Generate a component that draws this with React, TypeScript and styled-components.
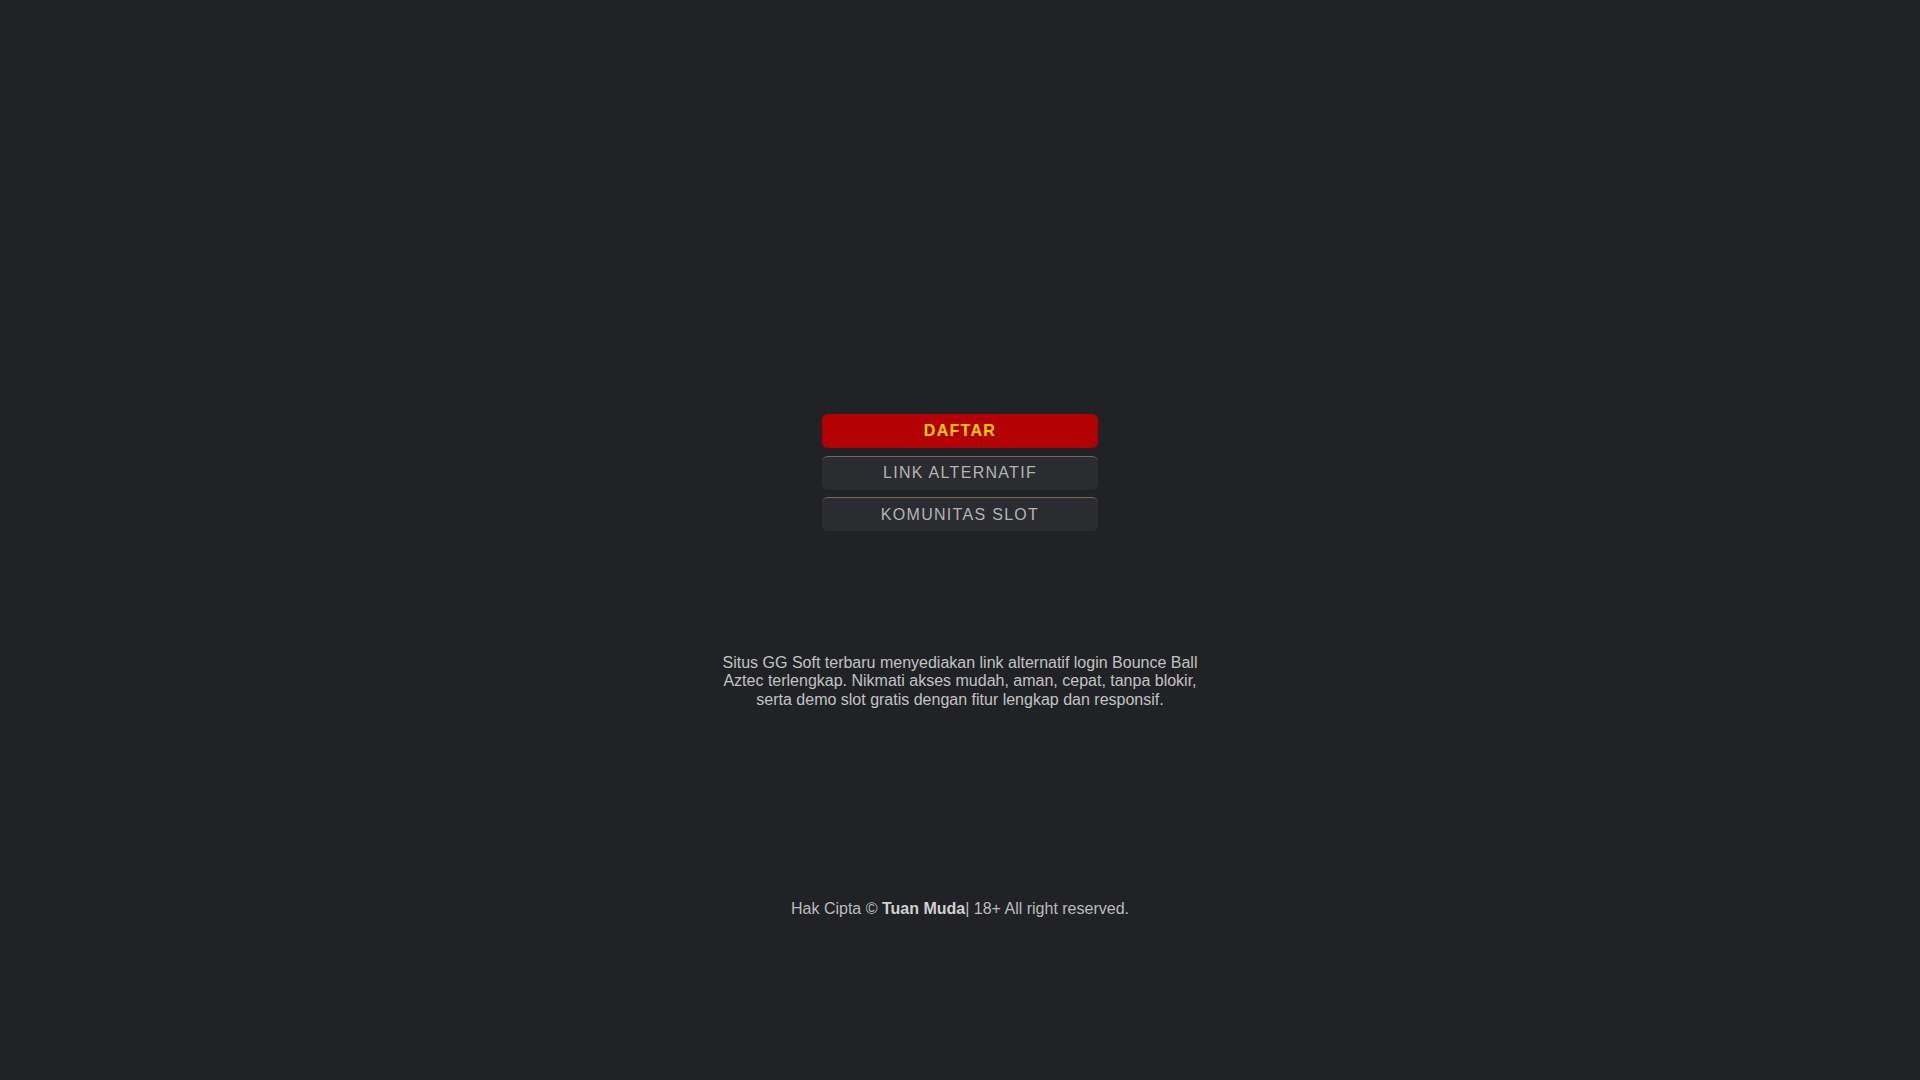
import React, { FC } from 'react';
import styled, { createGlobalStyle } from 'styled-components';

const GlobalStyle = createGlobalStyle`
  html, body {
    margin: 0;
    padding: 0;
    background-color: #212226;
    font-family: "Liberation Sans", Arial, sans-serif;
  }
`;

/** Page wrapper */
const Page = styled.div`
  display: flex;
  flex-direction: column;
  align-items: center;
  min-height: 1080px;
  padding-top: 414px;
  box-sizing: border-box;
  background-color: #212226;
`;

/** Button group */
const ButtonGroup = styled.nav`
  display: flex;
  flex-direction: column;
  gap: 7.5px;
  width: 276px;
`;

const LinkButton = styled.a<{ $primary?: boolean }>`
  display: flex;
  align-items: center;
  justify-content: center;
  height: 34px;
  box-sizing: border-box;
  border-radius: 6px;
  font-size: 16px;
  letter-spacing: 1.3px;
  text-decoration: none;
  cursor: pointer;
  background-color: ${(p) => (p.$primary ? '#b30000' : '#2b2c2f')};
  color: ${(p) => (p.$primary ? '#ffd000' : '#b4b4b6')};
  font-weight: ${(p) => (p.$primary ? 700 : 400)};
  border-top: ${(p) => (p.$primary ? 'none' : '1px solid #7a6a55')};
`;

/** Description */
const Description = styled.p`
  margin: 123px 0 0;
  width: 480px;
  text-align: center;
  font-size: 16px;
  line-height: 18.4px;
  color: #c2c2c4;
`;

/** Footer */
const Footer = styled.footer`
  margin-top: 191px;
  font-size: 16px;
  line-height: 18.4px;
  color: #bcbcbe;

  strong {
    color: #d0d0d2;
  }
`;

const App: FC = () => {
  return (
    <>
      <GlobalStyle />
      <Page>
        <ButtonGroup>
          <LinkButton $primary>DAFTAR</LinkButton>
          <LinkButton>LINK ALTERNATIF</LinkButton>
          <LinkButton>KOMUNITAS SLOT</LinkButton>
        </ButtonGroup>

        <Description>
          Situs GG Soft terbaru menyediakan link alternatif login Bounce Ball Aztec terlengkap.
          Nikmati akses mudah, aman, cepat, tanpa blokir, serta demo slot gratis dengan fitur
          lengkap dan responsif.
        </Description>

        <Footer>
          Hak Cipta © <strong>Tuan Muda</strong>| 18+ All right reserved.
        </Footer>
      </Page>
    </>
  );
};

export default App;
